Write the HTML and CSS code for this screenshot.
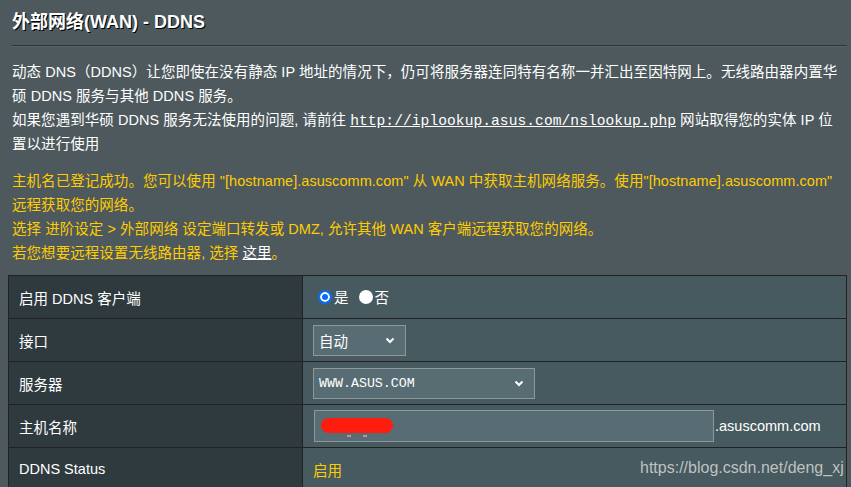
FILE: index.html
```html
<!DOCTYPE html>
<html lang="zh-CN">
<head>
<meta charset="utf-8">
<title>外部网络(WAN) - DDNS</title>
<link rel="stylesheet" href="styles.css">
</head>
<body>
<div class="page">
  <div class="title">外部网络(WAN) - DDNS</div>
  <div class="split"></div>
  <div class="desc">
    动态 DNS（DDNS）让您即使在没有静态 IP 地址的情况下，仍可将服务器连同特有名称一并汇出至因特网上。无线路由器内置华<br>
    硕 DDNS 服务与其他 DDNS 服务。<br>
    如果您遇到华硕 DDNS 服务无法使用的问题, 请前往 <a class="mono-link" href="#">http://iplookup.asus.com/nslookup.php</a> 网站取得您的实体 IP 位<br>
    置以进行使用
  </div>
  <div class="notice">
    主机名已登记成功。您可以使用 "[hostname].asuscomm.com" 从 WAN 中获取主机网络服务。使用"[hostname].asuscomm.com"<br>
    远程获取您的网络。<br>
    选择 进阶设定 &gt; 外部网络 设定端口转发或 DMZ, 允许其他 WAN 客户端远程获取您的网络。<br>
    若您想要远程设置无线路由器, 选择 <a class="here" href="#">这里</a>。
  </div>
  <table class="form">
    <tr>
      <th>启用 DDNS 客户端</th>
      <td>
        <div class="radios">
          <span class="radio on"></span><span class="rlabel">是</span>
          <span class="radio off"></span><span class="rlabel">否</span>
        </div>
      </td>
    </tr>
    <tr>
      <th>接口</th>
      <td>
        <div class="select small"><span>自动</span>
          <svg class="chev" width="10" height="7" viewBox="0 0 10 7"><polyline points="1.5,1.5 5,5 8.5,1.5" fill="none" stroke="#fff" stroke-width="2"/></svg>
        </div>
      </td>
    </tr>
    <tr>
      <th>服务器</th>
      <td>
        <div class="select wide"><span class="mono">WWW.ASUS.COM</span>
          <svg class="chev" width="10" height="7" viewBox="0 0 10 7"><polyline points="1.5,1.5 5,5 8.5,1.5" fill="none" stroke="#fff" stroke-width="2"/></svg>
        </div>
      </td>
    </tr>
    <tr>
      <th>主机名称</th>
      <td>
        <div class="host">
          <div class="input"><span class="redact"></span><span class="dots"><i></i><i></i></span></div>
          <span class="suffix">.asuscomm.com</span>
        </div>
      </td>
    </tr>
    <tr>
      <th>DDNS Status</th>
      <td><span class="status">启用</span></td>
    </tr>
  </table>
  <div class="watermark">https://blog.csdn.net/deng_xj</div>
</div>
</body>
</html>
```

FILE: styles.css
```css
html, body {
  margin: 0;
  height: 100%;
  overflow: hidden;
  background: #4D595D;
}

body {
  font-family: "Liberation Sans", "Noto Sans CJK SC", sans-serif;
  font-size: 14.5px;
  color: #fff;
}

.page {
  position: relative;
  padding: 10px 4px 0 8px;
}

.title {
  padding-left: 4px;
  font-size: 18px;
  font-weight: bold;
  line-height: 24px;
  text-shadow: 1px 1px 0 #000;
}

.split {
  margin: 11px 0 0 4px;
  border-top: 1px solid #2c3639;
  border-bottom: 1px solid #56636a;
}

.desc {
  margin-top: 13px;
  padding-left: 4px;
  line-height: 24px;
  letter-spacing: 0.05px;
  white-space: nowrap;
}

.mono-link {
  font-family: "Liberation Mono", monospace;
  font-size: 14.6px;
  line-height: 20px;
  color: #fff;
  text-decoration: underline;
}

.notice {
  margin-top: 13px;
  padding-left: 4px;
  line-height: 24px;
  letter-spacing: 0.05px;
  color: #FFCC00;
  white-space: nowrap;
}

.here {
  color: #fff;
  text-decoration: underline;
}

.form {
  margin-top: 10px;
  width: 839px;
  border-collapse: collapse;
  border: 1px solid #222;
}

.form tr {
  height: 43px;
}

.form th,
.form td {
  border: 1px solid #222;
  padding: 0 10px;
  text-align: left;
  font-weight: normal;
  vertical-align: middle;
}

.form th {
  width: 273px;
  background: #2F3A3F;
}

.form td {
  background: #475A5F;
}

.radios {
  display: flex;
  align-items: center;
  margin-top: -1px;
}

.radio {
  box-sizing: border-box;
  width: 14px;
  height: 14px;
  border-radius: 50%;
  margin-left: 5px;
  margin-right: 2px;
}

.radio.on {
  background: #0a6cf5;
  border: 2px solid #0a6cf5;
  box-shadow: inset 0 0 0 2px #fff;
}

.radio.off {
  background: #fff;
  margin-left: 10px;
}

.select {
  box-sizing: border-box;
  display: flex;
  align-items: center;
  justify-content: space-between;
  height: 31px;
  padding: 0 10px 0 5px;
  background: #576D73;
  border: 1px solid #8c989b;
}

.select.small {
  width: 93px;
}

.select.wide {
  width: 222px;
}

.mono {
  font-family: "Liberation Mono", monospace;
  font-size: 13.3px;
}

.host {
  display: flex;
  align-items: center;
}

.input {
  box-sizing: border-box;
  position: relative;
  width: 400px;
  height: 32px;
  margin-left: 1px;
  background: #576D73;
  border: 1px solid #8c989b;
}

.redact {
  position: absolute;
  left: 6px;
  top: 7px;
  width: 72px;
  height: 15px;
  border-radius: 8px;
  background: #ff1d10;
}

.dots {
  position: absolute;
  left: 32px;
  top: 24px;
  display: flex;
  gap: 12px;
}

.dots i {
  width: 4px;
  height: 2px;
  background: #c98f8f;
}

.suffix {
  margin-left: 1px;
}

.status {
  color: #FFCC00;
}

.watermark {
  position: absolute;
  left: 640px;
  top: 459px;
  font-size: 16px;
  color: rgba(215, 215, 215, 0.85);
}
```
